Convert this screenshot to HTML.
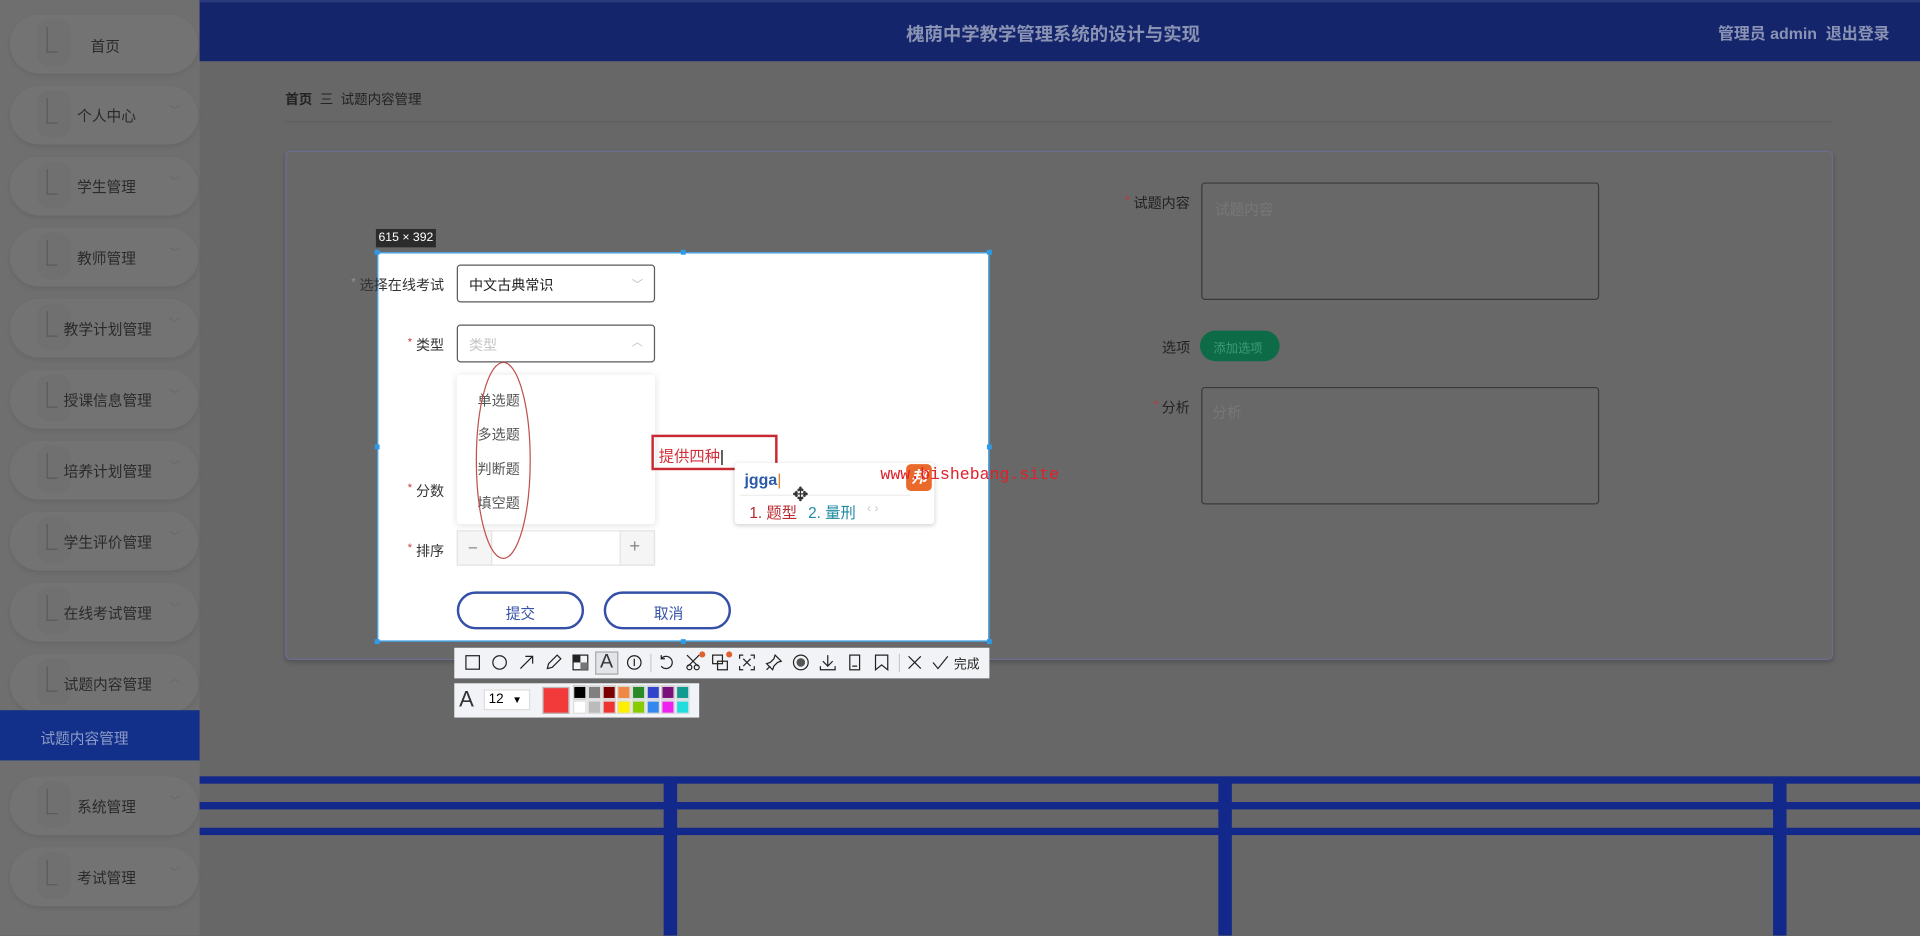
<!DOCTYPE html>
<html><head><meta charset="utf-8">
<style>
*{margin:0;padding:0;box-sizing:border-box}
body{width:1920px;height:936px;overflow:hidden;background:#676767;font-family:"Liberation Sans","Noto Sans CJK SC",sans-serif}
#s{position:absolute;left:0;top:0;width:1568px;height:764px;transform:scale(1.22449);transform-origin:0 0;background:#676767;overflow:hidden}
.a{position:absolute}
.side{left:0;top:0;width:163px;height:764px;background:#6f6f6f}
.pill{position:absolute;left:8px;width:154px;height:48px;border-radius:24px;background:#737373;box-shadow:0 2px 4px rgba(0,0,0,.08)}
.pill .ic{position:absolute;left:22px;top:4px;width:28px;height:38px;border-radius:10px;background:#707070}
.pill .ic:before{content:"";position:absolute;left:8px;top:6px;width:8px;height:20px;border-left:1.5px solid #5a5a5a;border-bottom:1.5px solid #5a5a5a}
.pill span{position:absolute;top:16px;font-size:12px;color:#2a2a2a;white-space:nowrap}
.pill i{position:absolute;left:130px;top:13px;font-style:normal;font-size:9px;color:#666}
.hdr{left:163px;top:0;width:1405px;height:50px;background:#14256c;border-top:2px solid #2a3a7a}
.t{position:absolute;font-size:12px;color:#222;white-space:nowrap}
.lbl{position:absolute;font-size:11.5px;color:#333;white-space:nowrap;text-align:right}
.lbl b{color:#c33;font-weight:normal;font-size:9px;vertical-align:top}
.box{position:absolute;border:1.5px solid #5a5a5a;border-radius:3px;background:#fff}
.tb svg{position:absolute;top:5px}
.sw{position:absolute;width:11px;height:11px;border:1px solid #ddd}
</style></head><body><div id="s">

<div class="a side">
  <div class="pill" style="top:12px"><div class="ic"></div><span style="left:66px;top:17px">首页</span></div>
  <div class="pill" style="top:70px"><div class="ic"></div><span style="left:55px">个人中心</span><i>﹀</i></div>
  <div class="pill" style="top:128px"><div class="ic"></div><span style="left:55px">学生管理</span><i>﹀</i></div>
  <div class="pill" style="top:186px"><div class="ic"></div><span style="left:55px">教师管理</span><i>﹀</i></div>
  <div class="pill" style="top:244px"><div class="ic"></div><span style="left:44px">教学计划管理</span><i>﹀</i></div>
  <div class="pill" style="top:302px"><div class="ic"></div><span style="left:44px">授课信息管理</span><i>﹀</i></div>
  <div class="pill" style="top:360px"><div class="ic"></div><span style="left:44px">培养计划管理</span><i>﹀</i></div>
  <div class="pill" style="top:418px"><div class="ic"></div><span style="left:44px">学生评价管理</span><i>﹀</i></div>
  <div class="pill" style="top:476px"><div class="ic"></div><span style="left:44px">在线考试管理</span><i>﹀</i></div>
  <div class="pill" style="top:534px"><div class="ic"></div><span style="left:44px">试题内容管理</span><i>︿</i></div>
  <div class="a" style="left:0;top:580px;width:163px;height:41px;background:#12308a"></div>
  <div class="t" style="left:33px;top:594px;color:#8d9cc6">试题内容管理</div>
  <div class="pill" style="top:634px"><div class="ic"></div><span style="left:55px">系统管理</span><i>﹀</i></div>
  <div class="pill" style="top:692px"><div class="ic"></div><span style="left:55px">考试管理</span><i>﹀</i></div>
</div>

<div class="a hdr"></div>
<div class="t" style="left:740px;top:17px;font-size:15px;font-weight:bold;color:#8a93b3">槐荫中学教学管理系统的设计与实现</div>
<div class="t" style="left:1403px;top:17px;font-size:13px;font-weight:bold;color:#8a93b3">管理员 admin&nbsp;&nbsp;退出登录</div>

<div class="t" style="left:233px;top:73px;font-size:11px"><b>首页</b>&nbsp; 三&nbsp; 试题内容管理</div>
<div class="a" style="left:233px;top:99px;width:1264px;height:1px;background:#5e5e5e"></div>

<div class="a" style="left:233px;top:123px;width:1264px;height:416px;border:1.5px solid #6c6c90;border-radius:4px;background:#686868;box-shadow:0 2px 4px rgba(0,0,0,.2)"></div>
<div class="lbl" style="left:919px;top:158px;color:#222"><b>*</b> 试题内容</div>
<div class="a" style="left:981px;top:149px;width:325px;height:96px;border:1.5px solid #3a3a3a;border-radius:3px"></div>
<div class="t" style="left:992px;top:162px;color:#777">试题内容</div>
<div class="lbl" style="left:949px;top:276px;color:#222">选项</div>
<div class="a" style="left:980px;top:270px;width:65px;height:25px;border-radius:13px;background:#0d6b48"></div>
<div class="t" style="left:991px;top:276px;font-size:10px;color:#3f9a78">添加选项</div>
<div class="lbl" style="left:942px;top:325px;color:#222"><b>*</b> 分析</div>
<div class="a" style="left:981px;top:316px;width:325px;height:96px;border:1.5px solid #3a3a3a;border-radius:3px"></div>
<div class="t" style="left:990px;top:328px;color:#777">分析</div>

<div class="a" style="left:163px;top:634px;width:1405px;height:6px;background:#12288a"></div>
<div class="a" style="left:163px;top:655px;width:1405px;height:6px;background:#12288a"></div>
<div class="a" style="left:163px;top:676px;width:1405px;height:6px;background:#12288a"></div>
<div class="a" style="left:542px;top:638px;width:11px;height:126px;background:#12288a"></div>
<div class="a" style="left:995px;top:638px;width:11px;height:126px;background:#12288a"></div>
<div class="a" style="left:1448px;top:638px;width:11px;height:126px;background:#12288a"></div>

<div class="a" style="left:307px;top:187px;width:49px;height:15px;background:#2b2b2b;color:#fff;font-size:10px;line-height:15px;text-align:center">615 × 392</div>
<div class="a" style="left:308px;top:206px;width:500px;height:318px;background:#fff;border:1px solid #2e9be6"></div>
<div class="a" style="left:306px;top:204px;width:4px;height:4px;background:#2e9be6"></div>
<div class="a" style="left:556px;top:204px;width:4px;height:4px;background:#2e9be6"></div>
<div class="a" style="left:806px;top:204px;width:4px;height:4px;background:#2e9be6"></div>
<div class="a" style="left:306px;top:363px;width:4px;height:4px;background:#2e9be6"></div>
<div class="a" style="left:806px;top:363px;width:4px;height:4px;background:#2e9be6"></div>
<div class="a" style="left:306px;top:522px;width:4px;height:4px;background:#2e9be6"></div>
<div class="a" style="left:556px;top:522px;width:4px;height:4px;background:#2e9be6"></div>
<div class="a" style="left:806px;top:522px;width:4px;height:4px;background:#2e9be6"></div>

<div class="lbl" style="left:287px;top:225px"><b style="color:#999">*</b> 选择在线考试</div>
<div class="box" style="left:373px;top:216px;width:162px;height:31px"></div>
<div class="t" style="left:383px;top:225px;font-size:11.5px">中文古典常识</div>
<div class="t" style="left:516px;top:225px;font-size:9px;color:#bbb">﹀</div>
<div class="lbl" style="left:333px;top:274px"><b>*</b> 类型</div>
<div class="box" style="left:373px;top:265px;width:162px;height:31px"></div>
<div class="t" style="left:383px;top:274px;font-size:11.5px;color:#c4c4c4">类型</div>
<div class="t" style="left:516px;top:272px;font-size:9px;color:#bbb">︿</div>
<div class="a" style="left:373px;top:306px;width:162px;height:122px;background:#fff;box-shadow:0 1px 6px rgba(0,0,0,.12);border-radius:3px"></div>
<div class="t" style="left:390px;top:319px;font-size:11.5px;color:#555">单选题</div>
<div class="t" style="left:390px;top:347px;font-size:11.5px;color:#555">多选题</div>
<div class="t" style="left:390px;top:375px;font-size:11.5px;color:#555">判断题</div>
<div class="t" style="left:390px;top:403px;font-size:11.5px;color:#555">填空题</div>
<div class="lbl" style="left:333px;top:393px"><b>*</b> 分数</div>
<div class="lbl" style="left:333px;top:442px"><b>*</b> 排序</div>
<div class="a" style="left:373px;top:433px;width:162px;height:29px;border:1px solid #e4e4e4;border-radius:3px;background:#fff"></div>
<div class="a" style="left:373px;top:433px;width:29px;height:29px;background:#f5f5f5;border:1px solid #e4e4e4"></div>
<div class="a" style="left:506px;top:433px;width:29px;height:29px;background:#f5f5f5;border:1px solid #e4e4e4"></div>
<div class="t" style="left:382px;top:439px;font-size:14px;color:#888">−</div>
<div class="t" style="left:514px;top:438px;font-size:15px;color:#888">+</div>
<svg class="a" style="left:385px;top:292px" width="52" height="168"><ellipse cx="26" cy="84" rx="22" ry="80" fill="none" stroke="#c0504d" stroke-width="1"/></svg>
<div class="a" style="left:373px;top:483px;width:104px;height:31px;border:2px solid #3450a8;border-radius:16px"></div>
<div class="t" style="left:413px;top:492px;color:#3450a8">提交</div>
<div class="a" style="left:493px;top:483px;width:104px;height:31px;border:2px solid #3450a8;border-radius:16px"></div>
<div class="t" style="left:534px;top:492px;color:#3450a8">取消</div>

<div class="a" style="left:532px;top:355px;width:103px;height:29px;border:2px solid #c8282f"></div>
<div class="t" style="left:538px;top:362px;color:#d2303a;font-size:12.5px">提供四种<span style="color:#000">|</span></div>
<div class="a" style="left:600px;top:378px;width:163px;height:50px;background:#fff;box-shadow:0 1px 4px rgba(0,0,0,.2);border-radius:3px"></div>
<div class="a" style="left:604px;top:404px;width:140px;height:1px;background:#eee"></div>
<div class="t" style="left:608px;top:384px;color:#2a5aa8;font-weight:bold;font-size:13px">jgga<span style="color:#e08020;font-weight:normal">|</span></div>
<div class="t" style="left:612px;top:408px;color:#b8292f;font-size:12.5px">1. 题型</div>
<div class="t" style="left:660px;top:408px;color:#1d8aa0;font-size:12.5px">2. 量刑</div>
<div class="t" style="left:708px;top:410px;color:#ccc;font-size:10px">‹ ›</div>
<div class="a" style="left:740px;top:379px;width:21px;height:22px;background:#ea6a2c;border-radius:4px;color:#fff;font-size:13px;font-weight:bold;text-align:center;line-height:22px;font-style:italic">邦</div>
<div class="t" style="left:719px;top:381px;color:#e0202a;font-family:'Liberation Mono',monospace;font-size:13.5px">www.bishebang.site</div>
<div class="t" style="left:647px;top:394px;font-size:16px;color:#333">✥</div>

<div class="a tb" style="left:371px;top:529px;width:437px;height:25px;background:#f2f3f6">
<svg style="left:8px" width="14" height="14" fill="none" stroke="#222"><rect x="1.5" y="1.5" width="11" height="11"/></svg>
<svg style="left:30px" width="14" height="14" fill="none" stroke="#222"><circle cx="7" cy="7" r="5.5"/></svg>
<svg style="left:52px" width="14" height="14" fill="none" stroke="#222"><path d="M2 12L12 2M6 2h6v6"/></svg>
<svg style="left:74px" width="14" height="14" fill="none" stroke="#222"><path d="M2 12l1-4 7-7 3 3-7 7z"/></svg>
<svg style="left:96px" width="14" height="14"><rect x="1" y="1" width="12" height="12" fill="none" stroke="#222"/><rect x="1" y="1" width="6" height="6" fill="#222"/><rect x="7" y="7" width="6" height="6" fill="#777"/></svg>
<div class="a" style="left:115px;top:3px;width:19px;height:19px;border:1px solid #aaa;background:#e2e4e8"></div>
<div class="a" style="left:119px;top:3px;font-size:16px;color:#333">A</div>
<svg style="left:140px" width="14" height="14" fill="none" stroke="#222"><circle cx="7" cy="7" r="5.5"/><path d="M7 4v6"/></svg>
<div class="a" style="left:160px;top:5px;width:1px;height:15px;background:#ccc"></div>
<svg style="left:166px" width="14" height="14" fill="none" stroke="#222"><path d="M3 4a5 5 0 1 1 0 6M3 1v3h3"/></svg>
<svg style="left:188px" width="14" height="14" fill="none" stroke="#222"><circle cx="4" cy="11" r="2"/><circle cx="10" cy="11" r="2"/><path d="M2 1l9 9M12 1l-9 9"/></svg>
<div class="a" style="left:200px;top:3px;width:5px;height:5px;border-radius:50%;background:#e06030"></div>
<svg style="left:210px" width="14" height="14" fill="none" stroke="#222"><rect x="1" y="1" width="8" height="7"/><rect x="5" y="6" width="8" height="7"/></svg>
<div class="a" style="left:222px;top:3px;width:5px;height:5px;border-radius:50%;background:#e06030"></div>
<svg style="left:232px" width="14" height="14" fill="none" stroke="#222"><path d="M1 4V1h3M10 1h3v3M13 10v3h-3M4 13H1v-3M4 4l6 6M10 4l-6 6"/></svg>
<svg style="left:254px" width="14" height="14" fill="none" stroke="#222"><path d="M8 1l5 5-3 1-3 3-1 3-5-5 3-1 3-3zM1 13l3-3"/></svg>
<svg style="left:276px" width="14" height="14"><circle cx="7" cy="7" r="6" fill="none" stroke="#222"/><circle cx="7" cy="7" r="3.5" fill="#555"/></svg>
<svg style="left:298px" width="14" height="14" fill="none" stroke="#222"><path d="M7 1v9M3 6l4 4 4-4M1 10v3h12v-3"/></svg>
<svg style="left:320px" width="14" height="14" fill="none" stroke="#222"><rect x="3" y="1" width="8" height="12"/><path d="M5 10h4"/></svg>
<svg style="left:342px" width="14" height="14" fill="none" stroke="#222"><path d="M2 1h10v12l-5-4-5 4z"/></svg>
<div class="a" style="left:363px;top:5px;width:1px;height:15px;background:#ccc"></div>
<svg style="left:369px" width="14" height="14" fill="none" stroke="#222"><path d="M2 2l10 10M12 2L2 12"/></svg>
<svg style="left:390px" width="14" height="14" fill="none" stroke="#222"><path d="M1 7l4 5 8-10"/></svg>
<div class="a" style="left:408px;top:6px;font-size:10.5px;color:#222">完成</div>
</div>
<div class="a" style="left:371px;top:558px;width:200px;height:28px;background:#f2f3f6">
<div class="a" style="left:4px;top:3px;font-size:18px;color:#333">A</div>
<div class="a" style="left:24px;top:5px;width:38px;height:17px;background:#fff;border:1px solid #ddd;font-size:11px;padding-left:3px;line-height:15px">12 <span style="font-size:8px;margin-left:4px">▼</span></div>
<div class="a" style="left:72px;top:3px;width:22px;height:22px;background:#f23a3a;border:1px solid #bbb"></div>
<div class="sw" style="left:97px;top:2px;background:#000"></div><div class="sw" style="left:109px;top:2px;background:#808080"></div><div class="sw" style="left:121px;top:2px;background:#7a0000"></div><div class="sw" style="left:133px;top:2px;background:#ee8844"></div><div class="sw" style="left:145px;top:2px;background:#2a8a2a"></div><div class="sw" style="left:157px;top:2px;background:#3344cc"></div><div class="sw" style="left:169px;top:2px;background:#7a107a"></div><div class="sw" style="left:181px;top:2px;background:#109a90"></div>
<div class="sw" style="left:97px;top:14px;background:#fff"></div><div class="sw" style="left:109px;top:14px;background:#bbb"></div><div class="sw" style="left:121px;top:14px;background:#ee3333"></div><div class="sw" style="left:133px;top:14px;background:#ffee00"></div><div class="sw" style="left:145px;top:14px;background:#88cc00"></div><div class="sw" style="left:157px;top:14px;background:#3388ee"></div><div class="sw" style="left:169px;top:14px;background:#ee22ee"></div><div class="sw" style="left:181px;top:14px;background:#22dddd"></div>
</div>

</div></body></html>
